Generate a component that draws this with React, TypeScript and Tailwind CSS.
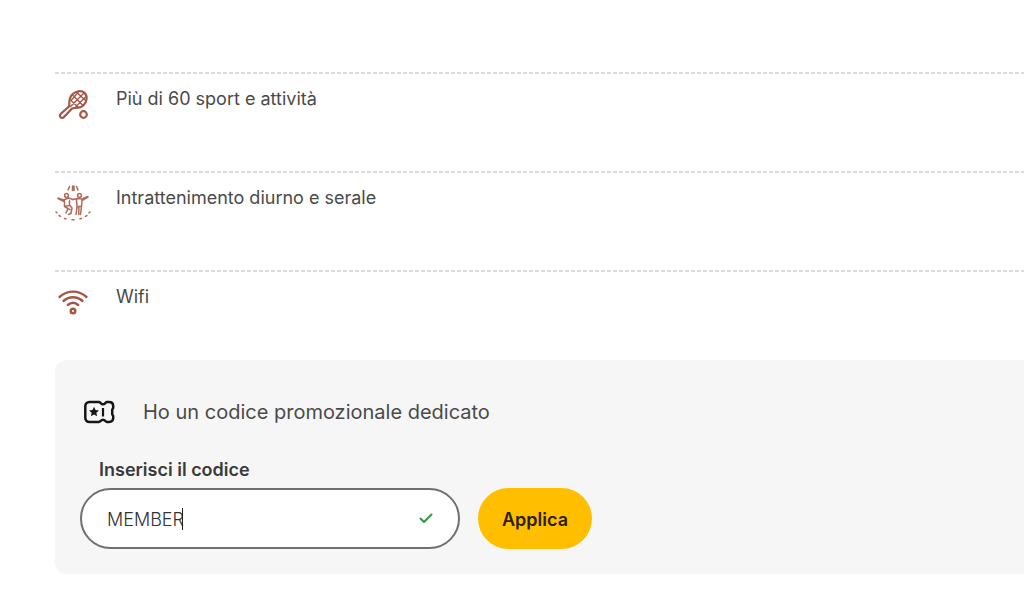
import { useState } from 'react';

const RacketIcon = () => (
  <svg className="w-9 h-9 shrink-0 text-[#a35644]" viewBox="0 0 36 36" fill="none" stroke="currentColor" strokeLinecap="round" strokeLinejoin="round" aria-hidden="true">
    <path strokeWidth="2.2" d="M14 20.500c.8-3-.8-8 3.200-12 3.500-3.600 9-4.600 12.300-1.600 3.300 3.100 2.600 8.800-1 12.300-3.700 3.600-8.500 2.300-11.500 3.300L9 31c-1.100 1.200-2.700 1.100-3.500.3s-.9-2.400.3-3.500z" />
    <path strokeWidth="1.400" d="M16 14.500l7 6.500M18 9.500l9.500 9.500M22 6.500l8.500 8M15.500 20.500L29 7M16.500 14L23 6.500M21 20.500l9.500-9.500" />
    <circle cx="28.500" cy="28.500" r="3.300" strokeWidth="2.200" />
  </svg>
);

const DanceIcon = () => (
  <svg className="w-9 h-9 shrink-0 text-[#ae6c5b]" viewBox="0 0 36 36" fill="none" stroke="currentColor" strokeWidth="1.500" strokeLinecap="round" strokeLinejoin="round" aria-hidden="true">
    {/* Stage lights */}
    <path d="M14.500 1.500L13 5M17.500 1v4.500M19 1v4.500M21.500 1.500L23 5" />
    {/* Left dancer */}
    <circle cx="11.500" cy="10.500" r="1.900" />
    <path d="M3 13l5.500 2 5-2 4.500 1.500M3 13.500l6 3M9.500 15.500v6l3.500 2-2 4.500M14.500 15.500V20l2.500 3-1 5.500-2.500 1M9.500 21.500l4.500-1M13.500 24l1.500.5" />
    {/* Right dancer */}
    <circle cx="24.500" cy="10.500" r="1.900" />
    <path d="M18 14.500l4-1 5 .5 6-2.500M33 12l-6 3.500M21.500 14.500l.5 7-1 8M27 15.500l-.5 6-1 8M22 21.500h4.500M23.800 22v7.500" />
    {/* Dance floor */}
    <path d="M1 27l1 .8M4 30.500l1.500.8M9.500 33.500l1.500.3M17 34.800h2M25 33.800l1.500-.3M30.500 31.300l1.500-.8M34 27.800l1-.8" />
  </svg>
);

const WifiIcon = () => (
  <svg className="w-9 h-9 shrink-0 text-[#a35644]" viewBox="0 0 36 36" fill="none" stroke="currentColor" strokeWidth="2.400" strokeLinecap="round" aria-hidden="true">
    <path d="M4.500 13C12.500 5.800 23.500 5.800 31.500 13" />
    <path d="M8.500 17c5.600-5 13.400-5 19 0" />
    <path d="M12.800 21c3.200-2.700 7.200-2.700 10.400 0" />
    <circle cx="18" cy="27" r="2.300" />
  </svg>
);

const TicketIcon = () => (
  <svg className="w-8 h-6 shrink-0 text-[#161616]" viewBox="0 0 32 24" fill="none" stroke="currentColor" strokeWidth="2.500" strokeLinecap="round" strokeLinejoin="round" aria-hidden="true">
    <path d="M6.500 2H16c1.500 0 2 2.300 4 2.300S22.500 2 24 2h2c2.500 0 4.200 1.700 4.200 4.200v1.300c0 1.500-1 1.500-1 2.500v4c0 1 1 1 1 2.500v1.300c0 2.500-1.700 4.200-4.200 4.200h-2c-1.500 0-2-2.300-4-2.300S17.500 22 16 22H6.500C4 22 2.300 20.300 2.300 17.800V6.200C2.300 3.700 4 2 6.500 2z" />
    <path fill="currentColor" stroke="none" d="M11 6.800l1.500 3.200 3.500.4-2.600 2.400.7 3.500-3.100-1.700-3.100 1.700.7-3.500L6 10.400l3.500-.4z" />
    <path strokeWidth="2.200" strokeLinecap="butt" d="M20 8v8.500" />
  </svg>
);

const features = [
  { label: 'Più di 60 sport e attività', Icon: RacketIcon },
  { label: 'Intrattenimento diurno e serale', Icon: DanceIcon },
  { label: 'Wifi', Icon: WifiIcon },
];

const FeatureList = () => (
  <ul className="pt-[72px]">
    {features.map(({ label, Icon }) => (
      <li key={label} className="h-[99px]">
        <div className="h-0.5 bg-[repeating-linear-gradient(90deg,#dcdcdc_0_4px,transparent_4px_6px)]"></div>
        <div className="flex items-start gap-[25px] pt-3">
          <Icon />
          <span className="text-lg leading-[26px] text-[#4a4a4a]">{label}</span>
        </div>
      </li>
    ))}
  </ul>
);

const PromoCode = () => {
  const [code, setCode] = useState('MEMBER');

  return (
    <section className="-mt-[9px] rounded-l-xl bg-[#f6f6f6] pl-[25px] pr-6 pt-[38px] pb-[25px]">
      <div className="flex items-center gap-7 pl-[3px]">
        <TicketIcon />
        <h2 className="text-xl leading-7 text-[#4a4a4a]">Ho un codice promozionale dedicato</h2>
      </div>

      <form onSubmit={(e) => e.preventDefault()} className="mt-8">
        <label htmlFor="promo-code" className="block pl-[19px] text-lg leading-6 font-semibold text-[#3a3a3a]">
          Inserisci il codice
        </label>
        <div className="mt-1.5 flex items-center gap-[18px]">
          <div className="relative w-[380px]">
            <input
              id="promo-code"
              type="text"
              value={code}
              onChange={(e) => setCode(e.target.value)}
              className="h-[61px] w-full rounded-full border-2 border-[#707070] bg-white pt-0.5 pl-[25px] pr-14 text-lg font-light text-[#333333] outline-none"
            />
            {/* Text cursor */}
            <span className="absolute left-[102px] top-5 h-[22px] w-px bg-[#222222]"></span>
            <svg className="absolute right-[26px] top-[23px] w-4 h-4 text-[#2f9a48]" viewBox="0 0 16 16" fill="none" stroke="currentColor" strokeWidth="2" strokeLinecap="round" strokeLinejoin="round" aria-hidden="true">
              <path d="M2.500 7.500l3.500 3.500 7.500-7.500" />
            </svg>
          </div>
          <button type="submit" className="h-[61px] rounded-full bg-[#ffbe00] pt-0.5 px-6 text-lg font-semibold text-[#2b2000]">
            Applica
          </button>
        </div>
      </form>
    </section>
  );
};

export default function App() {
  return (
    <main className="min-h-screen bg-white pl-[55px] pb-8 font-['Inter',sans-serif]">
      <FeatureList />
      <PromoCode />
    </main>
  );
}
